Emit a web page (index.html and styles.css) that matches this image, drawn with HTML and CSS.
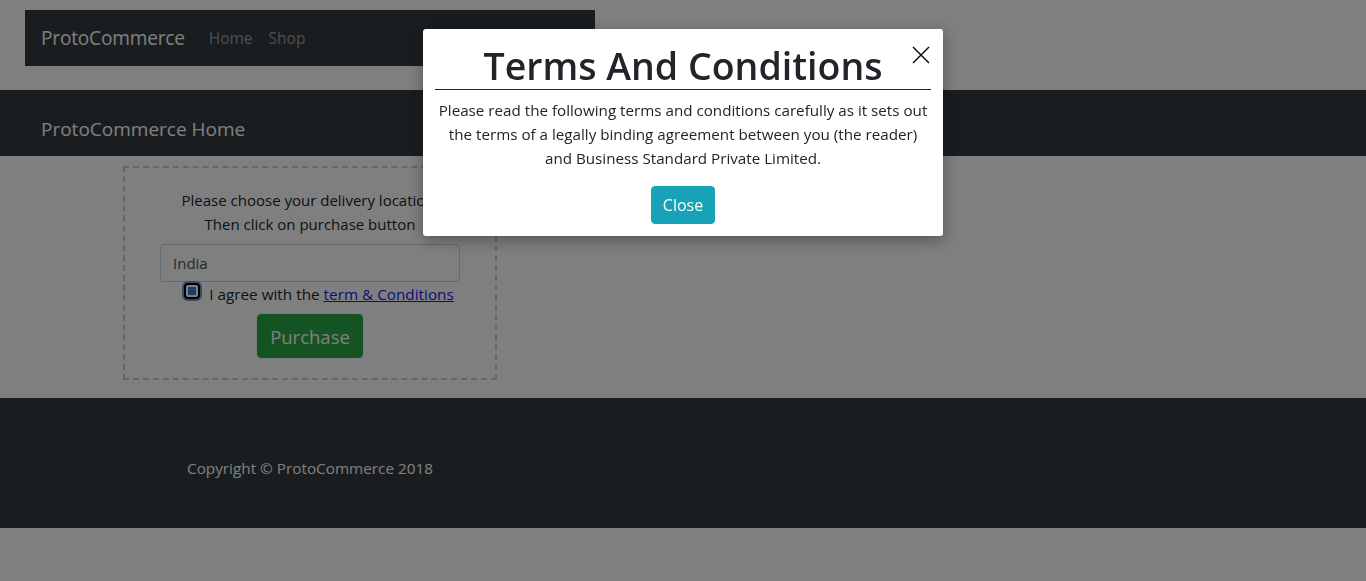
FILE: index.html
```html
<!DOCTYPE html>
<html lang="en">
<head>
<meta charset="utf-8">
<title>ProtoCommerce</title>
<link rel="stylesheet" href="styles.css">
</head>
<body>
<div class="page">
  <nav class="navbar">
    <span class="brand">ProtoCommerce</span>
    <a class="nav-link">Home</a>
    <a class="nav-link">Shop</a>
  </nav>
  <header class="jumbo">
    <h2 class="jumbo-title">ProtoCommerce Home</h2>
  </header>
  <main class="content">
    <div class="delivery-box">
      <p class="instructions">Please choose your delivery location.<br>Then click on purchase button</p>
      <div class="input">India</div>
      <div class="agree">
        <span class="checkbox"><span class="check-fill"></span></span>
        <span class="agree-text">I agree with the <a class="terms-link">term &amp; Conditions</a></span>
      </div>
      <button class="btn-purchase">Purchase</button>
    </div>
  </main>
  <footer class="footer">
    <p class="copyright">Copyright © ProtoCommerce 2018</p>
  </footer>
</div>
<div class="backdrop"></div>
<div class="modal">
  <div class="modal-content">
    <div class="modal-header">
      <h1 class="modal-title">Terms And Conditions</h1>
      <button class="close-x" aria-label="Close">
        <svg width="18" height="18" viewBox="0 0 18 18"><path d="M1 1 L17 17 M17 1 L1 17" stroke="#000" stroke-width="1.4" fill="none"/></svg>
      </button>
    </div>
    <p class="modal-body">Please read the following terms and conditions carefully as it sets out the terms of a legally binding agreement between you (the reader) and Business Standard Private Limited.</p>
    <div class="modal-footer">
      <button class="btn-close">Close</button>
    </div>
  </div>
</div>
</body>
</html>
```
FILE: styles.css
```css
* { box-sizing: border-box; }
html, body { margin: 0; padding: 0; }
body {
  font-family: "Open Sans", "Noto Sans", sans-serif;
  font-size: 16px;
  color: #212529;
  background: #fff;
  height: 581px;
  overflow: hidden;
}
.page { padding-top: 10px; }
.navbar {
  margin-left: 25px;
  width: 570px;
  height: 56px;
  background: #343a40;
  display: flex;
  align-items: center;
  padding: 0 16px;
}
.brand { color: #fff; font-size: 19.1px; margin-right: 24px; letter-spacing: -0.2px; }
.nav-link { color: rgba(255,255,255,.5); font-size: 15.5px; margin-right: 16px; }
.jumbo {
  margin-top: 24px;
  height: 66px;
  background: #343a40;
  display: flex;
  align-items: flex-end;
  padding: 0 41px 15px;
}
.jumbo-title { margin: 0; font-weight: 400; font-size: 19px; color: #fff; line-height: 24px; }
.content { padding: 10px 0 18px 123px; }
.delivery-box {
  width: 374px;
  height: 214px;
  border: 2px dashed #ccc;
  display: flex;
  flex-direction: column;
  align-items: center;
  padding-top: 20px;
}
.instructions { margin: 0; text-align: center; font-size: 15px; line-height: 24px; }
.input {
  margin-top: 8px;
  width: 300px;
  height: 38px;
  border: 1px solid #ced4da;
  border-radius: 4px;
  padding: 8px 12px 6px;
  font-size: 15px;
  color: #495057;
}
.agree { display: flex; align-items: center; margin-left: 18px; gap: 9px; height: 24px; }
.checkbox {
  align-self: flex-start;
  margin-top: 1px;
  width: 16px; height: 16px;
  border: 2px solid #000;
  border-radius: 4px;
  background: #fff;
  box-shadow: 0 0 0 2px #6c9bd0;
  display: flex; align-items: center; justify-content: center;
}
.check-fill { width: 8px; height: 8px; background: #3d7bd6; border-radius: 1px; }
.agree-text { font-size: 15.3px; }
.terms-link { color: #1a1aee; text-decoration: underline; }
.btn-purchase {
  margin-top: 8px;
  width: 106px; height: 44px;
  background: #28a745;
  border: 1px solid #28a745;
  border-radius: 4px;
  color: #fff;
  font-family: inherit;
  font-size: 18.5px;
}
.footer {
  height: 130px;
  background: #343a40;
  display: flex;
  align-items: center;
  padding: 10px 0 0 187px;
}
.copyright { margin: 0; color: #fff; font-size: 15.3px; }
.backdrop {
  position: fixed; inset: 0;
  background: rgba(0,0,0,.5);
}
.modal {
  position: fixed; inset: 0;
  display: flex; justify-content: center; align-items: flex-start;
  padding-top: 29px;
}
.modal-content {
  width: 520px;
  height: 207px;
  background: #fff;
  border-radius: 3px;
  box-shadow: 0 4px 16px rgba(0,0,0,.35);
  padding: 0 12px;
  display: flex; flex-direction: column;
}
.modal-header { position: relative; border-bottom: 1px solid #212529; padding-top: 13px; height: 61px; }
.modal-title { margin: 0; text-align: center; font-size: 37.5px; font-weight: 600; line-height: 48px; }
.close-x {
  position: absolute; right: 1px; top: 17px;
  background: none; border: 0; padding: 0; width: 18px; height: 18px;
}
.close-x svg { display: block; }
.modal-body { margin: 8px 0 0; text-align: center; font-size: 15.2px; line-height: 24px; }
.modal-footer { display: flex; justify-content: center; margin-top: 16px; }
.btn-close {
  width: 64px; height: 38px;
  background: #17a2b8; border: 1px solid #17a2b8; border-radius: 4px;
  color: #fff; font-family: inherit; font-size: 16px;
}
```
